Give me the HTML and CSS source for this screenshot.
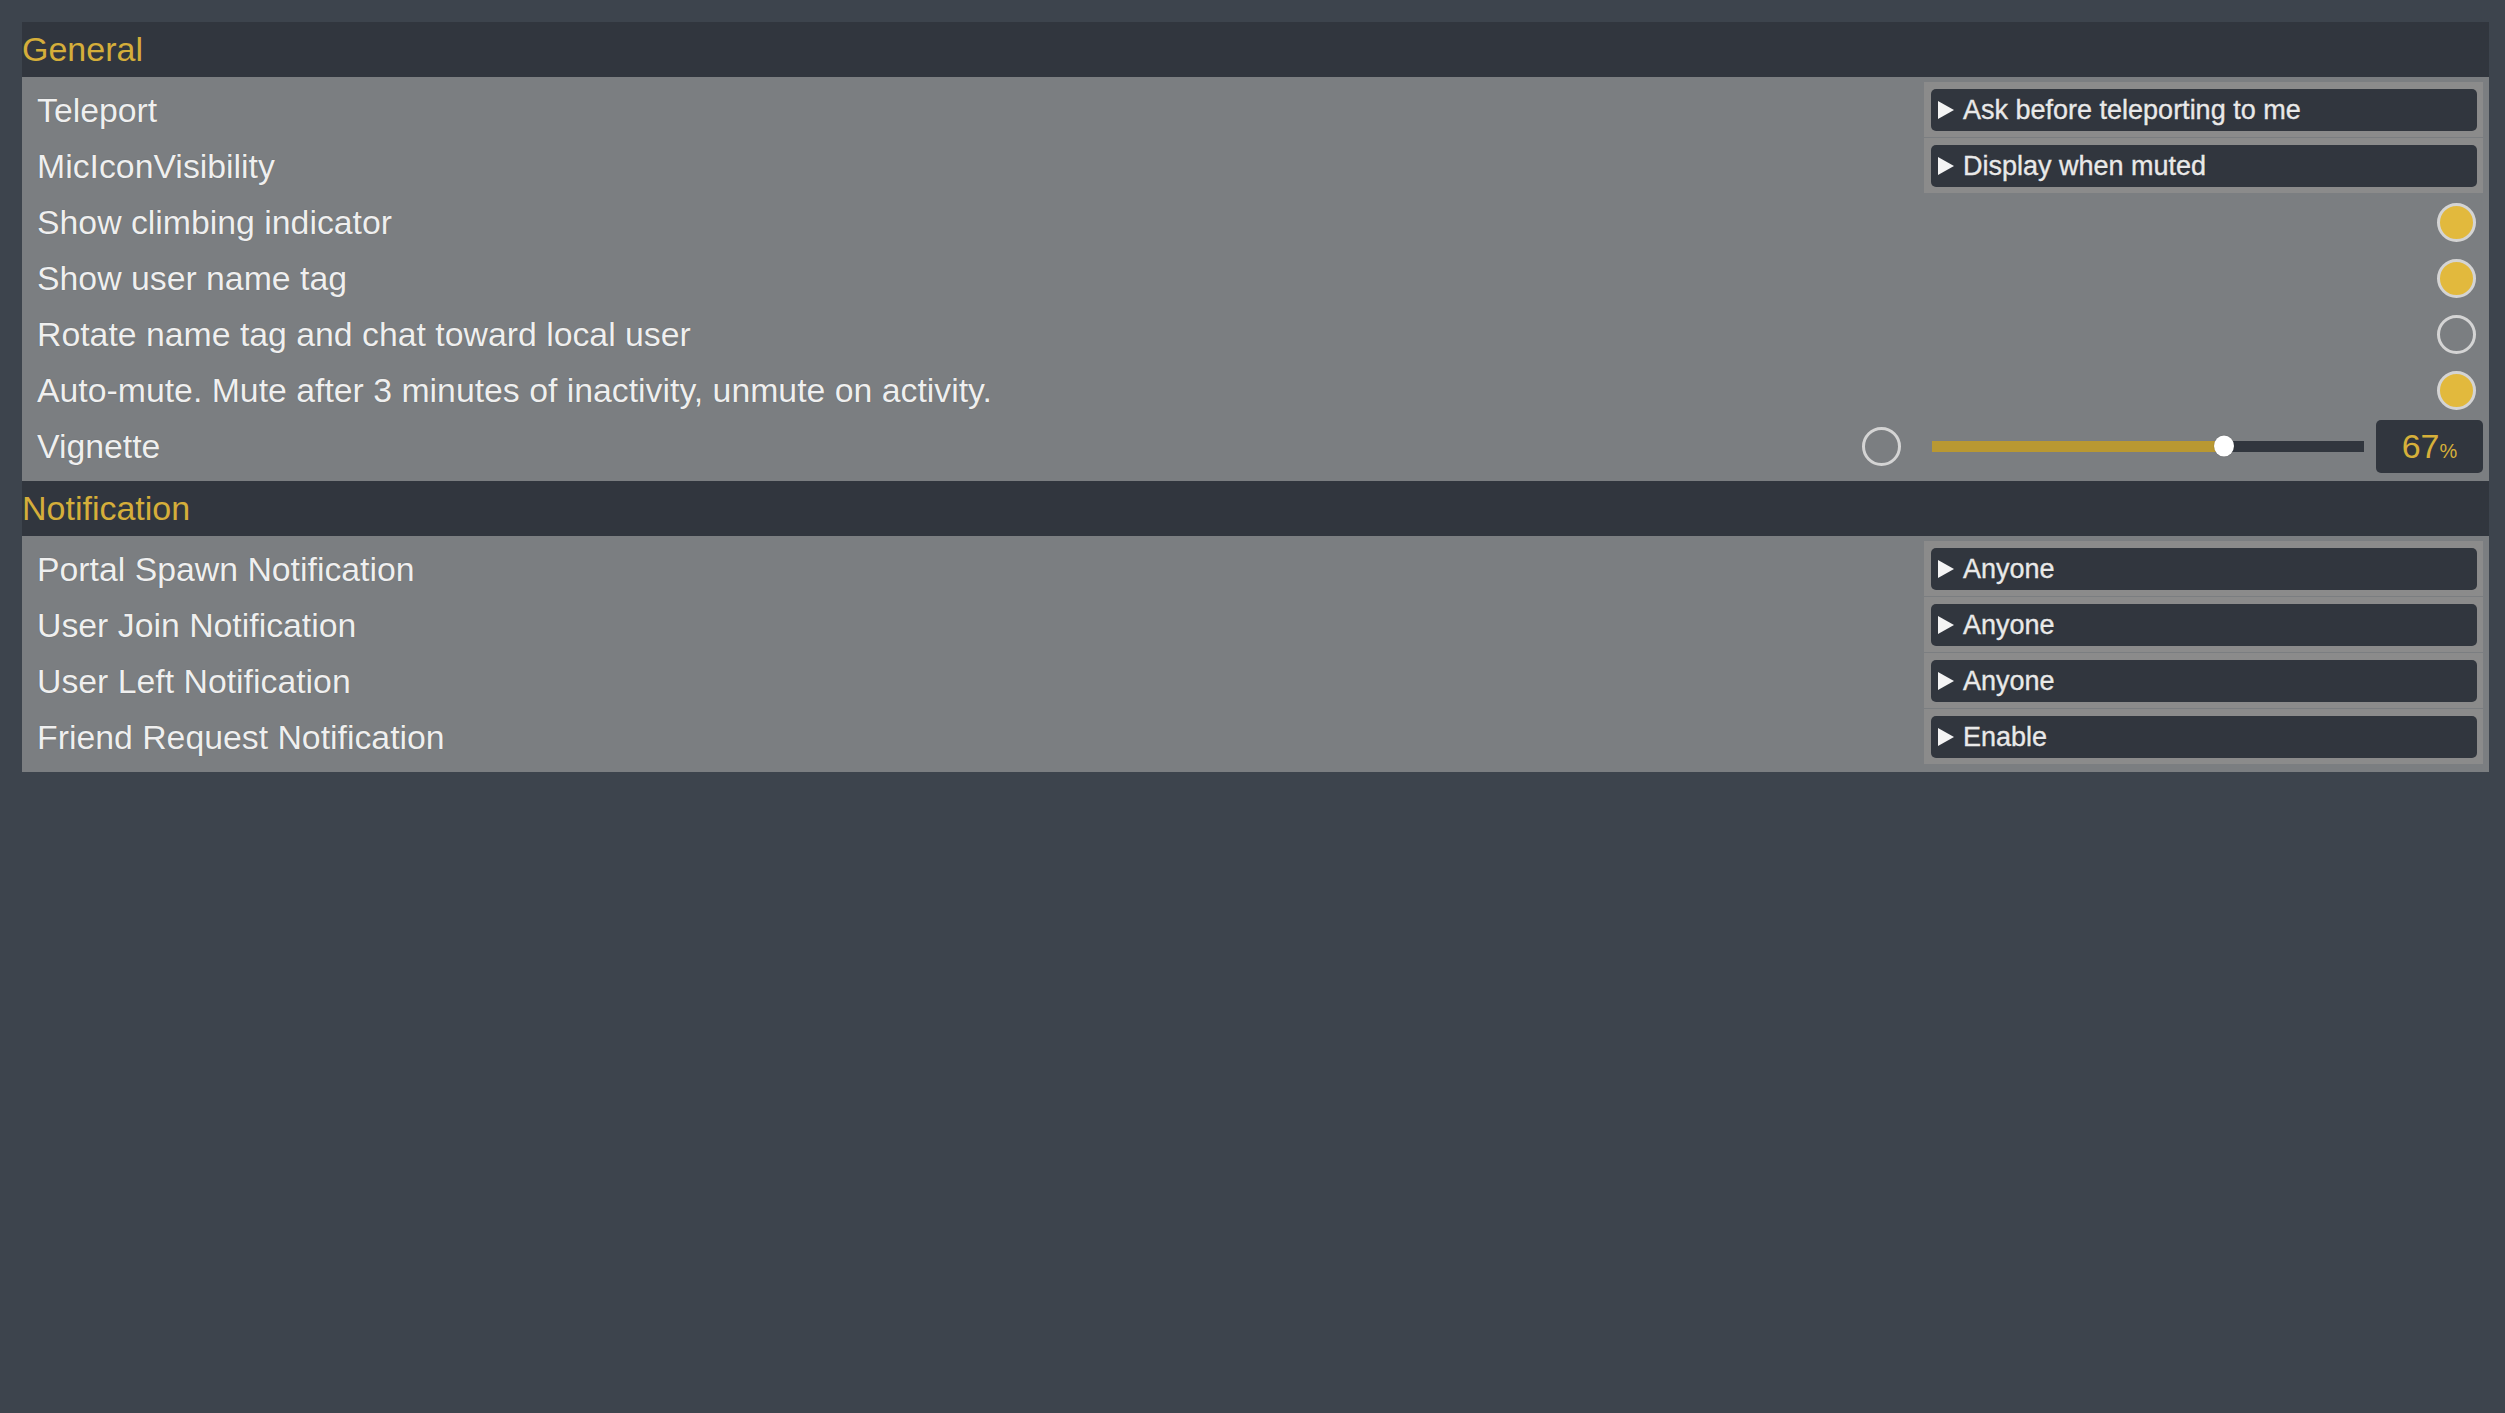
FILE: index.html
```html
<!DOCTYPE html>
<html lang="en">
<head>
<meta charset="utf-8">
<title>Settings</title>
<link rel="stylesheet" href="styles.css">
</head>
<body>
<div class="settings">
  <section class="group">
    <h2 class="group-title">General</h2>
    <div class="group-body">
      <div class="row">
        <span class="label">Teleport</span>
        <div class="select"><div class="select-box"><svg class="caret" viewBox="0 0 16 18"><polygon points="0,0 16,9 0,18"/></svg><span>Ask before teleporting to me</span></div></div>
      </div>
      <div class="row">
        <span class="label">MicIconVisibility</span>
        <div class="select"><div class="select-box"><svg class="caret" viewBox="0 0 16 18"><polygon points="0,0 16,9 0,18"/></svg><span>Display when muted</span></div></div>
      </div>
      <div class="row">
        <span class="label">Show climbing indicator</span>
        <span class="toggle on"></span>
      </div>
      <div class="row">
        <span class="label">Show user name tag</span>
        <span class="toggle on"></span>
      </div>
      <div class="row">
        <span class="label">Rotate name tag and chat toward local user</span>
        <span class="toggle"></span>
      </div>
      <div class="row">
        <span class="label">Auto-mute. Mute after 3 minutes of inactivity, unmute on activity.</span>
        <span class="toggle on"></span>
      </div>
      <div class="row">
        <span class="label">Vignette</span>
        <div class="slider-group">
          <span class="toggle slider-toggle"></span>
          <div class="track">
            <div class="fill" style="width:67.5%"></div>
            <span class="thumb" style="left:67.5%"></span>
          </div>
          <div class="value">67<small>%</small></div>
        </div>
      </div>
    </div>
  </section>
  <section class="group">
    <h2 class="group-title">Notification</h2>
    <div class="group-body">
      <div class="row">
        <span class="label">Portal Spawn Notification</span>
        <div class="select"><div class="select-box"><svg class="caret" viewBox="0 0 16 18"><polygon points="0,0 16,9 0,18"/></svg><span>Anyone</span></div></div>
      </div>
      <div class="row">
        <span class="label">User Join Notification</span>
        <div class="select"><div class="select-box"><svg class="caret" viewBox="0 0 16 18"><polygon points="0,0 16,9 0,18"/></svg><span>Anyone</span></div></div>
      </div>
      <div class="row">
        <span class="label">User Left Notification</span>
        <div class="select"><div class="select-box"><svg class="caret" viewBox="0 0 16 18"><polygon points="0,0 16,9 0,18"/></svg><span>Anyone</span></div></div>
      </div>
      <div class="row">
        <span class="label">Friend Request Notification</span>
        <div class="select"><div class="select-box"><svg class="caret" viewBox="0 0 16 18"><polygon points="0,0 16,9 0,18"/></svg><span>Enable</span></div></div>
      </div>
    </div>
  </section>
</div>
</body>
</html>
```
FILE: styles.css
```css
html, body {
  margin: 0;
  height: 100%;
}
body {
  background: #3d444d;
  font-family: "Liberation Sans", Arial, sans-serif;
}
.settings {
  padding: 22px 0 0 22px;
  width: 2467px;
}
.group-title {
  margin: 0;
  height: 55px;
  line-height: 55px;
  background: #31363e;
  color: #d5ae3a;
  font-size: 34px;
  font-weight: normal;
}
.group-body {
  background: #7b7e81;
  padding: 5px 6px 7px 15px;
}
.row {
  height: 56px;
  display: flex;
  align-items: center;
  justify-content: space-between;
}
.label {
  color: #efefef;
  font-size: 33.8px;
  text-shadow: 0 0 1px rgba(0,0,0,0.3);
}
.select {
  align-self: flex-start;
  box-sizing: border-box;
  width: 559px;
  height: 55px;
  padding: 7px 6px 6px 7px;
  background: #8b8b8b;
}
.select-box {
  height: 42px;
  box-sizing: border-box;
  background: #31363e;
  border-radius: 5px;
  display: flex;
  align-items: center;
  gap: 9px;
  padding-left: 7px;
  color: #e9e9e9;
  font-size: 27px;
  -webkit-text-stroke: 0.4px #e9e9e9;
  text-shadow: 0 0 1px rgba(0,0,0,0.7);
}
.caret {
  width: 16px;
  height: 18px;
  fill: #f4f4f4;
  flex: none;
}
.toggle {
  box-sizing: border-box;
  width: 39px;
  height: 39px;
  border-radius: 50%;
  border: 3px solid #d4d4d4;
  margin-right: 7px;
  flex: none;
}
.toggle.on {
  background: #e2b93d;
}
.slider-group {
  display: flex;
  align-items: center;
}
.slider-toggle {
  margin-right: 31px;
}
.track {
  position: relative;
  width: 432px;
  height: 11px;
  background: #31363e;
  margin-right: 12px;
}
.fill {
  height: 100%;
  background: #b99832;
}
.thumb {
  position: absolute;
  top: 50%;
  width: 20px;
  height: 21px;
  border-radius: 50%;
  background: #ffffff;
  transform: translate(-50%, -50%);
  box-shadow: 0 0 1px rgba(0,0,0,0.4);
}
.value {
  width: 107px;
  height: 53px;
  box-sizing: border-box;
  background: #31363e;
  border-radius: 5px;
  display: flex;
  align-items: baseline;
  justify-content: center;
  line-height: 53px;
  color: #d6b03a;
  font-size: 34px;
}
.value small {
  font-size: 20px;
}
```
